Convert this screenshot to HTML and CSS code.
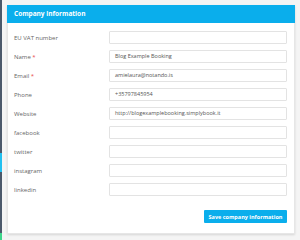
FILE: index.html
```html
<!DOCTYPE html>
<html lang="en">
<head>
    <meta charset="UTF-8">
    <meta name="viewport" content="width=device-width, initial-scale=1.0">
    <title>Company information</title>
    <link rel="stylesheet" href="styles.css">
</head>
<body>

    <div class="sidebar">
        <div class="side-dark top"></div>
        <div class="side-blue"></div>
        <div class="side-dark bottom"></div>
        <div class="side-green"></div>
    </div>

    <div class="main">
        <div class="card">
            <div class="card-header">Company information</div>
            <div class="card-body">
                <div class="row">
                    <label class="label">EU VAT number</label>
                    <div class="input"></div>
                </div>
                <div class="row">
                    <label class="label">Name <span class="req">*</span></label>
                    <div class="input">Blog Example Booking</div>
                </div>
                <div class="row">
                    <label class="label">Email <span class="req">*</span></label>
                    <div class="input">amielaura@notando.is</div>
                </div>
                <div class="row">
                    <label class="label">Phone</label>
                    <div class="input">+35797845954</div>
                </div>
                <div class="row">
                    <label class="label">Website</label>
                    <div class="input">http://blogexamplebooking.simplybook.it</div>
                </div>
                <div class="row">
                    <label class="label">facebook</label>
                    <div class="input"></div>
                </div>
                <div class="row">
                    <label class="label">twitter</label>
                    <div class="input"></div>
                </div>
                <div class="row">
                    <label class="label">instagram</label>
                    <div class="input"></div>
                </div>
                <div class="row">
                    <label class="label">linkedin</label>
                    <div class="input"></div>
                </div>
                <div class="actions">
                    <button class="button">Save company information</button>
                </div>
            </div>
        </div>
    </div>

</body>
</html>
```

FILE: styles.css
```css
* {
    margin: 0;
    padding: 0;
    box-sizing: border-box;
}

body {
    background-color: #f4f4f4;
    font-family: "Open Sans", Arial, sans-serif;
    color: #555;
    display: flex;
    height: 240px;
    overflow: hidden;
}

.sidebar {
    width: 2px;
    display: flex;
    flex-direction: column;
}

.side-dark {
    background-color: #4b596b;
}

.side-dark.top {
    height: 153px;
}

.side-dark.bottom {
    height: 61px;
}

.side-blue {
    height: 19px;
    background-color: #22c0f0;
}

.side-green {
    flex: 1;
    background-color: #3ed68c;
}

.main {
    flex: 1;
    padding: 5px 5px 0 5px;
}

.card {
    background-color: #fff;
    border: 1px solid #e6e6e6;
    box-shadow: 0 1px 2px rgba(0, 0, 0, 0.12);
}

.card-header {
    height: 18px;
    margin: -1px -1px 0 -1px;
    background-color: #0aaeec;
    color: #fff;
    font-size: 6.5px;
    font-weight: 700;
    line-height: 18px;
    padding-left: 7px;
}

.card-body {
    padding: 8px 7px 10px 6px;
    display: flex;
    flex-direction: column;
    gap: 6px;
}

.row {
    display: flex;
    align-items: center;
    height: 13px;
}

.label {
    width: 95px;
    font-size: 6px;
    color: #666;
}

.req {
    color: #e84a4a;
}

.input {
    flex: 1;
    height: 13px;
    border: 1px solid #e3e3e3;
    border-radius: 1px;
    font-size: 5.5px;
    line-height: 11px;
    padding-left: 5px;
    color: #555;
}

.actions {
    display: flex;
    justify-content: flex-end;
    margin-top: 8px;
}

.button {
    width: 83px;
    height: 13px;
    border: none;
    border-radius: 1px;
    background-color: #0aaeec;
    color: #fff;
    font-family: "Open Sans", Arial, sans-serif;
    font-size: 5.5px;
    font-weight: 700;
}
```
